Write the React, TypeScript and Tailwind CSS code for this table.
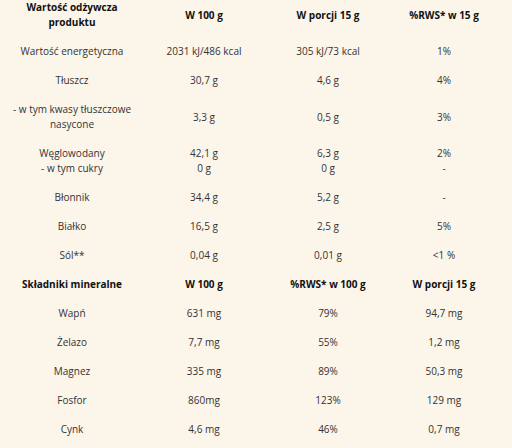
import React from 'react';

type Row = { cells: (string | string[])[]; bold?: boolean };

const rows: Row[] = [
  { cells: [['Wartość odżywcza', 'produktu'], 'W 100 g', 'W porcji 15 g', '%RWS* w 15 g'], bold: true },
  { cells: ['Wartość energetyczna', '2031 kJ/486 kcal', '305 kJ/73 kcal', '1%'] },
  { cells: ['Tłuszcz', '30,7 g', '4,6 g', '4%'] },
  { cells: [['- w tym kwasy tłuszczowe', 'nasycone'], '3,3 g', '0,5 g', '3%'] },
  { cells: [['Węglowodany', '- w tym cukry'], ['42,1 g', '0 g'], ['6,3 g', '0 g'], ['2%', '-']] },
  { cells: ['Błonnik', '34,4 g', '5,2 g', '-'] },
  { cells: ['Białko', '16,5 g', '2,5 g', '5%'] },
  { cells: ['Sól**', '0,04 g', '0,01 g', '<1 %'] },
  { cells: ['Składniki mineralne', 'W 100 g', '%RWS* w 100 g', 'W porcji 15 g'], bold: true },
  { cells: ['Wapń', '631 mg', '79%', '94,7 mg'] },
  { cells: ['Żelazo', '7,7 mg', '55%', '1,2 mg'] },
  { cells: ['Magnez', '335 mg', '89%', '50,3 mg'] },
  { cells: ['Fosfor', '860mg', '123%', '129 mg'] },
  { cells: ['Cynk', '4,6 mg', '46%', '0,7 mg'] },
];

const App = () => {
  return (
    <div
      className="w-[512px] h-[448px] overflow-hidden bg-[#fcf5ea] text-[#333] text-[10px] leading-[15px]"
      style={{ fontFamily: '"Open Sans", "Noto Sans", sans-serif' }}
    >
      <div className="-mt-[7px]">
        {rows.map((row, i) => (
          <div
            key={i}
            className={`grid grid-cols-[144px_120px_128px_104px] text-center ${row.bold ? 'font-bold text-[#111]' : ''}`}
          >
            {row.cells.map((cell, j) => (
              <div key={j} className="flex flex-col justify-center py-[7px]">
                {Array.isArray(cell) ? cell.map((line, k) => <span key={k}>{line}</span>) : <span>{cell}</span>}
              </div>
            ))}
          </div>
        ))}
      </div>
    </div>
  );
};

export default App;
